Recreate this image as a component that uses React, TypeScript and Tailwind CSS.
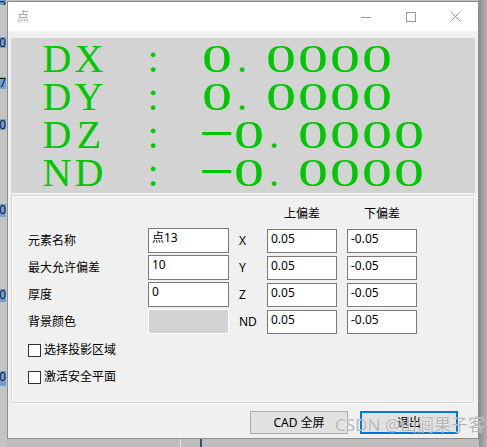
import React from 'react';

const ui = { fontFamily: '"Noto Sans", "Noto Sans CJK SC", sans-serif' };

// full-width style read-out, one 32px cell per character
const readout = ['DX : 0.0000', 'DY : 0.0000', 'DZ : -0.0000', 'ND : -0.0000'];

const rows = [
  { label: '元素名称', value: '点13', axis: 'X', up: '0.05', down: '-0.05' },
  { label: '最大允许偏差', value: '10', axis: 'Y', up: '0.05', down: '-0.05' },
  { label: '厚度', value: '0', axis: 'Z', up: '0.05', down: '-0.05' },
  { label: '背景颜色', value: null, axis: 'ND', up: '0.05', down: '-0.05' },
];

// bits of the app that sits behind the dialog
const behind = [
  { top: 0, h: 5, t: '3' },
  { top: 32, h: 11, t: '0' },
  { top: 29, h: 12, t: '-7' },
  { top: 30, h: 11, t: '0' },
  { top: 74, h: 13, t: '0' },
  { top: 72, h: 13, t: '0' },
  { top: 69, h: 15, t: '0' },
];

function Cell({ ch }: { ch: string }) {
  if (ch === '0')
    return (
      <span className="inline-block w-[32px] text-center">
        <span className="inline-block scale-x-[1.5]">0</span>
      </span>
    );
  if (ch === '.') return <span className="inline-block w-[32px] pl-[4px] text-left">.</span>;
  if (ch === '-')
    return (
      <span className="inline-block w-[32px] text-center">
        <span className="inline-block scale-x-[2.8] -translate-y-[5px]">-</span>
      </span>
    );
  if (ch === ' ') return <span className="inline-block w-[32px]">{'\u00a0'}</span>;
  return <span className="inline-block w-[32px] text-center">{ch}</span>;
}

function Field({ children, w, h = 'h-[25px]' }: { children?: React.ReactNode; w: string; h?: string }) {
  return (
    <div className={`${w} ${h} shrink-0 border border-[#7a7a7a] bg-white pl-[3px] pt-[2px] text-[12px] leading-[14px] text-black`}>
      {children}
    </div>
  );
}

function Check({ label }: { label: string }) {
  return (
    <div className="flex h-[20px] items-center">
      <div className="h-[13px] w-[13px] border border-[#333] bg-white" />
      <span className="ml-[3px] text-[12px] text-black">{label}</span>
    </div>
  );
}

export default function App() {
  return (
    <div className="relative flex h-[447px] w-[487px] overflow-hidden bg-[#bdbdbd]" style={ui}>
      {/* left strip of the window underneath */}
      <div className="flex w-[7px] shrink-0 flex-col bg-[#c4c4c4]">
        {behind.map((b, i) => (
          <div
            key={i}
            className="flex w-[6px] justify-end overflow-hidden bg-[#6f9fd9] text-[12px] leading-[12px] text-[#1a1a1a]"
            style={{ marginTop: b.top, height: b.h }}
          >
            <span className="whitespace-nowrap">{b.t}</span>
          </div>
        ))}
      </div>

      <div className="flex w-[472px] shrink-0 flex-col">
        <div className="h-[1px] bg-[#bdbdbd]" />
        {/* dialog */}
        <div className="flex h-[438px] flex-col border border-[#8e8e8e] bg-[#f0f0f0]">
          <div className="flex h-[29px] items-center bg-white">
            <span className="pl-[9px] text-[12px] text-[#9a9a9a]">点</span>
            <div className="ml-auto flex h-full">
              <div className="flex w-[45px] items-center justify-center">
                <svg width="10" height="10" viewBox="0 0 10 10"><path d="M0 5.5h10" stroke="#999" strokeWidth="1" /></svg>
              </div>
              <div className="flex w-[45px] items-center justify-center">
                <svg width="10" height="10" viewBox="0 0 10 10"><rect x="0.5" y="0.5" width="9" height="9" fill="none" stroke="#999" strokeWidth="1" /></svg>
              </div>
              <div className="flex w-[45px] items-center justify-center">
                <svg width="11" height="11" viewBox="0 0 11 11"><path d="M0.5 0.5l10 10M10.5 0.5l-10 10" stroke="#999" strokeWidth="1" /></svg>
              </div>
            </div>
          </div>

          <div className="flex flex-1 flex-col px-[3px] pt-[7px]">
            {/* read-out panel */}
            <div
              className="h-[155px] bg-[#d3d3d3] pl-[30px] pt-[2px] text-[40px] text-[#00c800]"
              style={{ fontFamily: '"Liberation Serif", serif' }}
            >
              {readout.map((line) => (
                <div key={line} className="h-[38px] whitespace-nowrap leading-[38px]">
                  {line.split('').map((c, i) => (
                    <Cell key={i} ch={c} />
                  ))}
                </div>
              ))}
            </div>

            {/* group box */}
            <div className="mr-[1px] mt-[2px] h-[208px] border border-[#d6d6d6] pl-[16px] pt-[9px] shadow-[inset_1px_1px_0_#fff,1px_1px_0_#fff]">
              <div className="flex h-[18px] items-center text-[12px] text-black">
                <div className="w-[239px] shrink-0" />
                <div className="w-[70px] text-center">上偏差</div>
                <div className="ml-[10px] w-[70px] text-center">下偏差</div>
              </div>
              <div className="mt-[5px] flex flex-col gap-[2px]">
                {rows.map((r) => (
                  <div key={r.label} className="flex h-[25px] items-center text-[12px] text-black">
                    <div className="w-[120px] shrink-0">{r.label}</div>
                    {r.value !== null ? (
                      <Field w="w-[81px]">{r.value}</Field>
                    ) : (
                      <div className="h-[25px] w-[81px] shrink-0 border border-white bg-[#d3d3d3]" />
                    )}
                    <div className="w-[38px] shrink-0 pl-[10px]">{r.axis}</div>
                    <Field w="w-[70px]" h="h-[24px]">{r.up}</Field>
                    <div className="w-[10px] shrink-0" />
                    <Field w="w-[70px]" h="h-[24px]">{r.down}</Field>
                  </div>
                ))}
              </div>
              <div className="mt-[6px] flex flex-col gap-[7px]">
                <Check label="选择投影区域" />
                <Check label="激活安全平面" />
              </div>
            </div>

            {/* buttons */}
            <div className="mt-[8px] flex justify-end gap-[12px] pr-[17px]">
              <button className="h-[23px] w-[98px] border border-[#adadad] bg-[#e1e1e1] text-[12px] text-black">CAD 全屏</button>
              <button className="h-[23px] w-[98px] border-2 border-[#0078d7] bg-[#e1e1e1] text-[12px] text-black">退出</button>
            </div>
          </div>
        </div>
        {/* desktop below */}
        <div className="flex flex-1 bg-[#bdbdbd]">
          <div className="w-[173px] shrink-0" />
          <div className="w-[1px] bg-[#e4e4e4]" />
          <div className="w-[19px] shrink-0" />
          <div className="w-[2px] bg-[#3b4d78]" />
        </div>
      </div>

      {/* window shadow on the right */}
      <div className="w-[8px] shrink-0 bg-gradient-to-r from-[#8c8c8c] to-[#b5b5b5]" />

      {/* site watermark */}
      <div
        className="absolute left-[335px] top-[412px] whitespace-nowrap text-[17px] text-[#a3a3a3]/80 [text-shadow:0_0_1px_#fff]"
        style={{ fontFamily: '"Noto Sans", "Noto Sans CJK SC", sans-serif' }}
      >
        CSDN @山涧果子客
      </div>
    </div>
  );
}
